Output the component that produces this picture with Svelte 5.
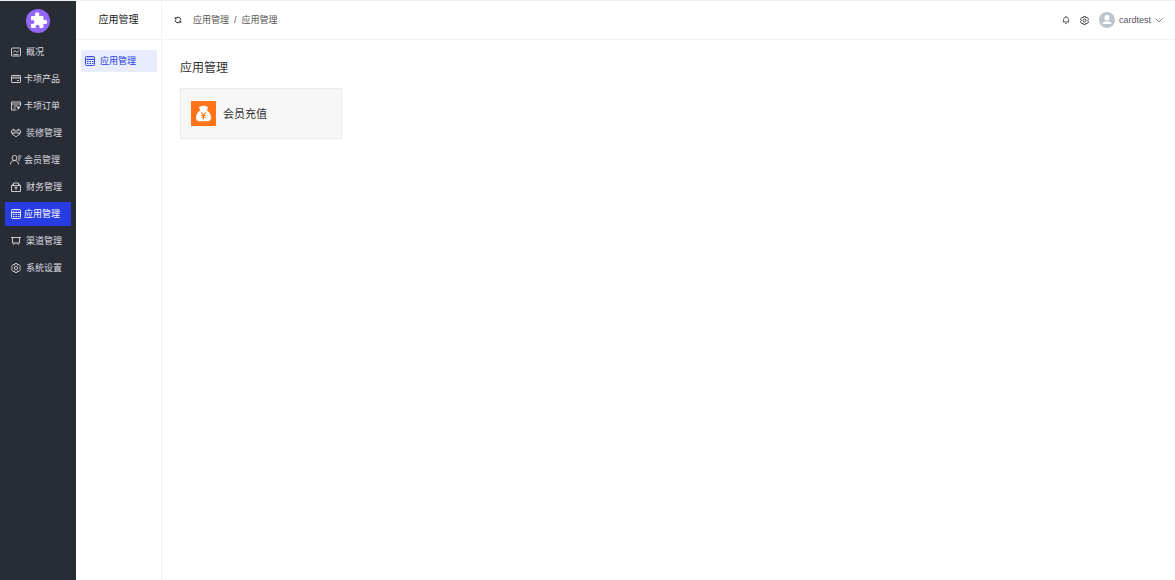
<script lang="ts">
    type Item = { icon: string; label: string; loose?: boolean };

    const menu: Item[] = [
        { icon: 'chart', label: '概况', loose: true },
        { icon: 'card', label: '卡项产品' },
        { icon: 'order', label: '卡项订单' },
        { icon: 'decor', label: '装修管理', loose: true },
        { icon: 'member', label: '会员管理' },
        { icon: 'finance', label: '财务管理', loose: true },
        { icon: 'apps', label: '应用管理' },
        { icon: 'channel', label: '渠道管理', loose: true },
        { icon: 'gear', label: '系统设置', loose: true }
    ];

    const subMenu: Item[] = [{ icon: 'apps', label: '应用管理' }];
    const apps = [{ label: '会员充值' }];

    let active = $state('应用管理');
    let activeSub = $state('应用管理');
</script>

{#snippet icon(name: string)}
    <svg class="icon {name}" viewBox="0 0 20 20" fill="none" stroke="currentColor" stroke-width="1.8" aria-hidden="true">
        {#if name === 'chart'}
            <rect x="1" y="2" width="18" height="16" rx="1" />
            <path d="M4 11l4-4 4 4 4-4M5 15h10" />
        {:else if name === 'card'}
            <rect x="1" y="3" width="18" height="14" rx="1" />
            <path d="M1 8h18M12 13h4" />
            <path d="M1 6h18" stroke-opacity="0.6" />
        {:else if name === 'order'}
            <path d="M19 10V2H1v16h10M1 6h18M5 10h8M5 14h4" />
            <path d="M12 11h7l-5 7z" fill="currentColor" stroke="none" />
        {:else if name === 'decor'}
            <path d="M6 2v4h8V2M6 2L1 5v5h18V5l-5-3" />
            <path d="M3 10v3l4 2 3 3 3-3 4-2v-3" />
        {:else if name === 'member'}
            <circle cx="7" cy="6" r="5" />
            <path d="M-1 19c0-5 3-8 8-8s8 3 8 8M14 2h7M14 6h6M14 10h4" />
        {:else if name === 'finance'}
            <path d="M1 7h18v12H1zM5 7V2h10v5M10 9v7M7 11h6" />
            <path d="M1 7l4-3M19 7l-4-3" />
        {:else if name === 'apps'}
            <rect x="1" y="1" width="18" height="18" rx="2" />
            <path d="M1 7h18" />
            <path d="M4 4h3M9 4h3M14 4h3" stroke-opacity="0.7" />
            <path d="M4 11h3M9 11h3M14 11h3M4 15h3M9 15h3M14 15h3" stroke-width="2" />
        {:else if name === 'channel'}
            <path d="M0 3h20M3 3v11h14V3M7 14l-2 4M13 14l2 4" />
        {:else if name === 'gear'}
            <path d="M8 1h4l1 3 3-1 3 4-2 3 2 3-3 4-3-1-1 3H8l-1-3-3 1-3-4 2-3-2-3 3-4 3 1z" />
            <circle cx="10" cy="10" r="3.3" />
        {:else if name === 'refresh'}
            <path d="M4 6c2-2 4-3 6-3 4 0 7 3 7 7M16 14c-2 2-4 3-6 3-4 0-7-3-7-7" stroke-width="2.4" />
            <path d="M2 2v6h6zM18 18v-6h-6z" fill="currentColor" stroke="none" />
        {:else if name === 'bell'}
            <path d="M10 0v3M2 15h16M4 15V9c0-4 3-6 6-6s6 2 6 6v6M8 19h4" />
        {:else if name === 'down'}
            <path d="M1 6l9 9 9-9" />
        {/if}
    </svg>
{/snippet}

<div class="layout">
    <aside class="sidebar">
        <a class="logo" href="#home" aria-label="首页">
            <svg viewBox="0 0 24 24" aria-hidden="true">
                <circle cx="12" cy="12" r="12" fill="#9467fb" />
                <path
                    fill="#fff"
                    d="M5 8.2c0-.7.5-1.2 1.2-1.2h3C9.4 6.500 9 6.2 9 5.5a2.2 2.2 0 0 1 4.4 0c0 .7-.4 1-.2 1.5h3c.7 0 1.2.5 1.2 1.2v2.7c.6.2.9-.2 1.500-.2a2.2 2.2 0 0 1 0 4.4c-.6 0-.9-.4-1.5-.2v3c0 .7-.5 1.2-1.2 1.2h-2.700c-.2-.6.1-.9.1-1.4a2 2 0 0 0-4 0c0 .5.3.8.1 1.4H6.2c-.7 0-1.2-.5-1.2-1.2v-3c.6-.2.9.2 1.4.2a2 2 0 0 0 0-4c-.5 0-.8.3-1.4.1z"
                />
            </svg>
        </a>
        <nav class="menu">
            {#each menu as item}
                <button
                    class="menu-item"
                    class:loose={item.loose}
                    class:active={active === item.label}
                    onclick={() => (active = item.label)}
                >
                    {@render icon(item.icon)}
                    <span>{item.label}</span>
                </button>
            {/each}
        </nav>
    </aside>

    <aside class="submenu">
        <div class="submenu-title">{active}</div>
        <nav class="submenu-list">
            {#each subMenu as item}
                <button
                    class="submenu-item"
                    class:active={activeSub === item.label}
                    onclick={() => (activeSub = item.label)}
                >
                    {@render icon(item.icon)}
                    <span>{item.label}</span>
                </button>
            {/each}
        </nav>
    </aside>

    <div class="container">
        <header class="header">
            <button class="icon-btn" aria-label="刷新">{@render icon('refresh')}</button>
            <nav class="breadcrumb">
                <a href="#app">应用管理</a>
                <span>/</span>
                <a href="#app-list">应用管理</a>
            </nav>
            <div class="tools">
                <button class="icon-btn" aria-label="消息">{@render icon('bell')}</button>
                <button class="icon-btn" aria-label="设置">{@render icon('gear')}</button>
                <button class="user">
                    <svg class="avatar" viewBox="0 0 16 16" aria-hidden="true">
                        <circle cx="8" cy="8" r="8" fill="#c0c4cc" />
                        <rect x="5.5" y="3" width="5" height="5.5" rx="2.3" fill="#fff" />
                        <path d="M3.5 12c0-2 1.5-2.8 4.5-2.8s4.5.8 4.5 2.8z" fill="#fff" />
                    </svg>
                    <span>cardtest</span>
                    {@render icon('down')}
                </button>
            </div>
        </header>

        <main class="main">
            <h1>应用管理</h1>
            <div class="app-list">
                {#each apps as app}
                    <a class="app-card" href="#recharge">
                        <svg class="app-icon" viewBox="0 0 25 25" aria-hidden="true">
                            <rect width="25" height="25" fill="#ff7419" />
                            <path
                                fill="#fff"
                                d="M8 6.8c.3-1.5 1.7-1 2.3-1.5.8-.7 1.8-.6 2.3-.1.7-.5 1.6-.5 2.2.1.7.5 2 .2 2.2 1.5L15.8 9.5H9.3zM9.4 9.2h6.3c3 1.8 4.5 4.7 4.3 7.8-.2 2.2-1.5 3.2-3.5 3.2h-8c-2 0-3.3-1-3.5-3.2-.2-2.6 1.3-6 4.4-7.8z"
                            />
                            <path
                                fill="none"
                                stroke="#ff7419"
                                stroke-width="1.1"
                                d="M10.3 11.4l2.2 2.6 2.2-2.6M12.5 14v4.5M10.3 14.5h4.4M10.3 16.3h4.4"
                            />
                        </svg>
                        <span>{app.label}</span>
                    </a>
                {/each}
            </div>
        </main>
    </div>
</div>

<style>
    :global(body) {
        background: #fff;
    }

    .layout {
        display: flex;
        min-height: 100vh;
        box-sizing: border-box;
        border-top: 1px solid #eeeff1;
        font-family: 'Liberation Sans', 'Noto Sans CJK SC', sans-serif;
        font-size: 9px;
        line-height: 14px;
        color: #333;
    }

    button {
        border: 0;
        padding: 0;
        background: none;
        color: inherit;
        font: inherit;
        cursor: pointer;
    }

    a {
        color: inherit;
        text-decoration: none;
    }

    .icon {
        width: 10px;
        height: 10px;
        flex: none;
        overflow: visible;
    }

    .sidebar {
        width: 76px;
        flex: none;
        box-sizing: border-box;
        padding: 0 5px;
        background: #282c34;
        color: #dcdde0;
    }

    .logo {
        display: flex;
        align-items: center;
        justify-content: center;
        height: 39px;
    }

    .logo svg {
        width: 24px;
        height: 24px;
    }

    .menu {
        display: flex;
        flex-direction: column;
        gap: 3px;
    }

    .menu-item {
        display: flex;
        align-items: center;
        gap: 3px;
        height: 24px;
        padding-left: 6px;
        border-radius: 1px;
        white-space: nowrap;
    }

    .menu-item.loose {
        gap: 5px;
    }

    .menu-item.active {
        background: #273de3;
        color: #fff;
    }

    .submenu {
        width: 86px;
        flex: none;
        box-sizing: border-box;
        border-right: 1px solid #f0f2f8;
    }

    .submenu-title {
        height: 38px;
        border-bottom: 1px solid #eff2f6;
        font-size: 10px;
        line-height: 38px;
        text-align: center;
        color: #222;
    }

    .submenu-list {
        display: flex;
        flex-direction: column;
        padding: 10px 4px 0 5px;
    }

    .submenu-item {
        display: flex;
        align-items: center;
        gap: 5px;
        height: 22px;
        padding-left: 4px;
        border-radius: 1px;
    }

    .submenu-item.active {
        background: #e9ecfd;
        color: #273de3;
    }

    .container {
        flex: 1;
        min-width: 0;
    }

    .header {
        display: flex;
        align-items: center;
        height: 38px;
        padding: 0 12px;
        border-bottom: 1px solid #eff2f6;
    }

    .header .icon {
        width: 8px;
        height: 8px;
    }

    .header .gear {
        width: 9px;
        height: 9px;
    }

    .icon-btn {
        display: flex;
        color: #222;
    }

    .breadcrumb {
        display: flex;
        gap: 5px;
        margin-left: 11px;
        color: #555;
    }

    .tools {
        display: flex;
        align-items: center;
        gap: 10px;
        margin-left: auto;
    }

    .user {
        display: flex;
        align-items: center;
        gap: 4px;
        color: #555;
    }

    .avatar {
        width: 16px;
        height: 16px;
    }

    .main {
        padding: 18px;
    }

    h1 {
        margin: 0 0 10px;
        font-size: 12px;
        font-weight: 400;
        line-height: 20px;
    }

    .app-list {
        display: flex;
        flex-wrap: wrap;
        gap: 10px;
    }

    .app-card {
        display: flex;
        align-items: center;
        gap: 7px;
        width: 162px;
        box-sizing: border-box;
        padding: 12px 10px;
        border: 1px solid #ebebeb;
        background: #f7f7f7;
        font-size: 11px;
    }

    .app-icon {
        width: 25px;
        height: 25px;
    }
</style>
